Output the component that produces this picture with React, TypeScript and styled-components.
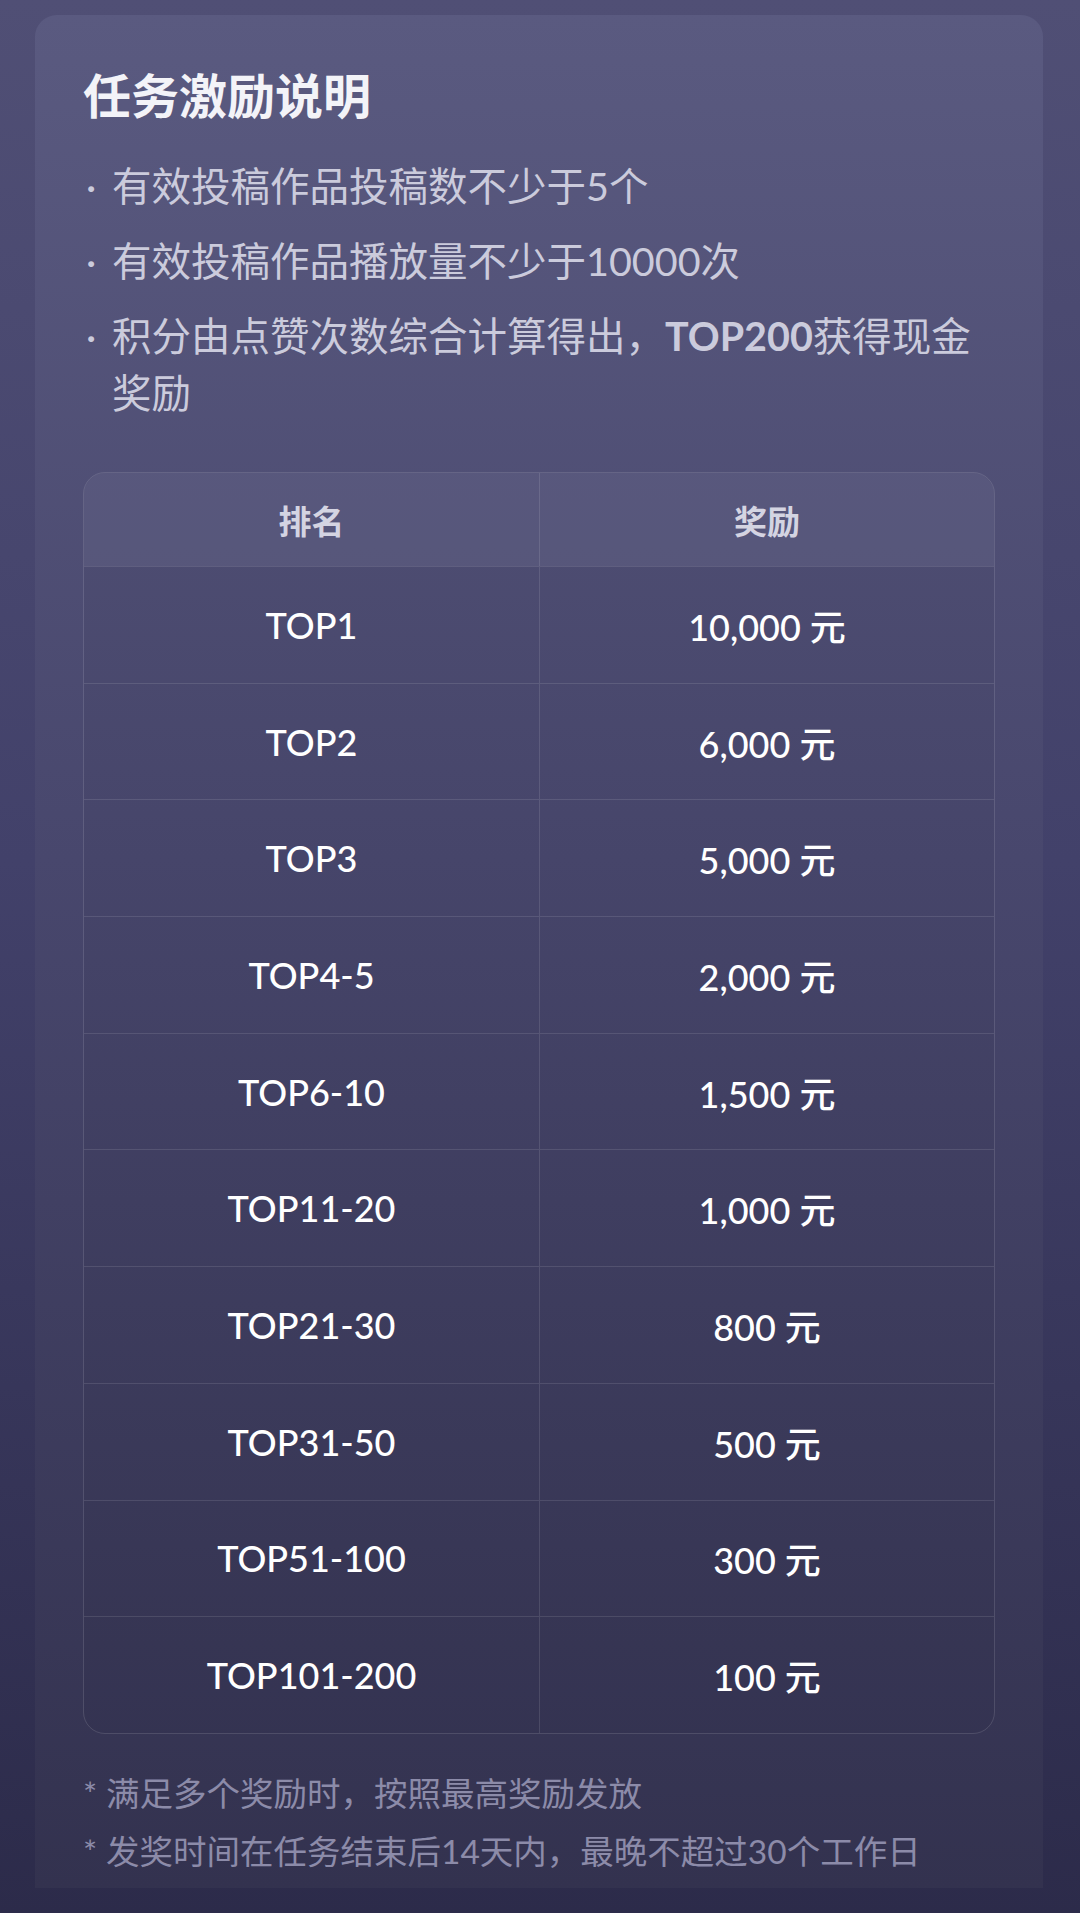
import React from "react";
import styled, { createGlobalStyle } from "styled-components";

const GlobalStyle = createGlobalStyle`
  html, body { margin: 0; padding: 0; }
  body {
    background: #2c2b4a;
    font-family: "Lato", "Noto Sans CJK SC", sans-serif;
    -webkit-font-smoothing: antialiased;
  }
`;

const Page = styled.div`
  box-sizing: border-box;
  min-height: 1913px;
  padding: 15px 37px 25px 35px;
  background: linear-gradient(180deg, #504f75 0%, #42416a 45%, #2c2b4a 100%);
`;

const Card = styled.section`
  border-radius: 22px 22px 0 0;
  padding: 45px 48px 8px 48px;
  background: linear-gradient(180deg, #5a5a80 0%, #48476d 45%, #33324f 100%);
`;

const Title = styled.h1`
  margin: 0;
  font-family: "Noto Sans CJK SC", sans-serif;
  font-size: 48px;
  line-height: 66px;
  font-weight: 700;
  color: #f3f3f8;
`;

const List = styled.ul`
  list-style: none;
  margin: 31px 0 0 0;
  padding: 0;
  display: flex;
  flex-direction: column;
  gap: 18px;
`;

const Item = styled.li`
  display: flex;
  font-size: 39.5px;
  line-height: 57px;
  color: #cbcbdc;
`;

const Dot = styled.span`
  flex: 0 0 29px;
  padding-left: 3px;
  box-sizing: border-box;
`;

const ItemText = styled.p`
  flex: 1;
  margin: 0;
`;

const Strong = styled.strong`
  font-weight: 700;
`;

const Table = styled.div`
  margin-top: 51px;
  border: 1px solid rgba(255, 255, 255, 0.12);
  border-radius: 22px;
  overflow: hidden;
`;

const Row = styled.div<{ $head?: boolean }>`
  display: grid;
  grid-template-columns: 1fr 1fr;
  height: ${(p) => (p.$head ? "93px" : "115.7px")};
  background: ${(p) => (p.$head ? "rgba(255,255,255,0.05)" : "rgba(0,0,0,0.025)")};
  & + & {
    border-top: 1px solid rgba(255, 255, 255, 0.11);
  }
`;

const Cell = styled.div<{ $head?: boolean }>`
  display: flex;
  align-items: center;
  justify-content: center;
  font-size: ${(p) => (p.$head ? "33px" : "36px")};
  font-weight: ${(p) => (p.$head ? 700 : 500)};
  color: ${(p) => (p.$head ? "#d4d4e2" : "#ffffff")};
  font-family: ${(p) =>
    p.$head ? `"Noto Sans CJK SC", sans-serif` : `"Lato", "Noto Sans CJK SC", sans-serif`};
  & + & {
    border-left: 1px solid rgba(255, 255, 255, 0.11);
  }
`;

const Notes = styled.div`
  margin-top: 30px;
  display: flex;
  flex-direction: column;
`;

const Note = styled.p`
  margin: 0;
  display: flex;
  font-size: 33.5px;
  line-height: 58px;
  color: #8c8ba9;
`;

const Star = styled.span`
  flex: 0 0 23px;
`;

const rules: React.ReactNode[] = [
  "有效投稿作品投稿数不少于5个",
  "有效投稿作品播放量不少于10000次",
  <>
    <span>积分由点赞次数综合计算得出，</span>
    <Strong>TOP200</Strong>
    <span>获得现金</span>
    <span>奖励</span>
  </>,
];

const rewards: [string, string][] = [
  ["TOP1", "10,000 元"],
  ["TOP2", "6,000 元"],
  ["TOP3", "5,000 元"],
  ["TOP4-5", "2,000 元"],
  ["TOP6-10", "1,500 元"],
  ["TOP11-20", "1,000 元"],
  ["TOP21-30", "800 元"],
  ["TOP31-50", "500 元"],
  ["TOP51-100", "300 元"],
  ["TOP101-200", "100 元"],
];

const notes = [
  "满足多个奖励时，按照最高奖励发放",
  "发奖时间在任务结束后14天内，最晚不超过30个工作日",
];

export default function App() {
  return (
    <>
      <GlobalStyle />
      <Page>
        <Card>
          <Title>任务激励说明</Title>
          <List>
            {rules.map((r, i) => (
              <Item key={i}>
                <Dot>·</Dot>
                <ItemText>{r}</ItemText>
              </Item>
            ))}
          </List>
          <Table>
            <Row $head>
              <Cell $head>排名</Cell>
              <Cell $head>奖励</Cell>
            </Row>
            {rewards.map(([rank, amount]) => (
              <Row key={rank}>
                <Cell>{rank}</Cell>
                <Cell>{amount}</Cell>
              </Row>
            ))}
          </Table>
          <Notes>
            {notes.map((n) => (
              <Note key={n}>
                <Star>*</Star>
                <span>{n}</span>
              </Note>
            ))}
          </Notes>
        </Card>
      </Page>
    </>
  );
}
